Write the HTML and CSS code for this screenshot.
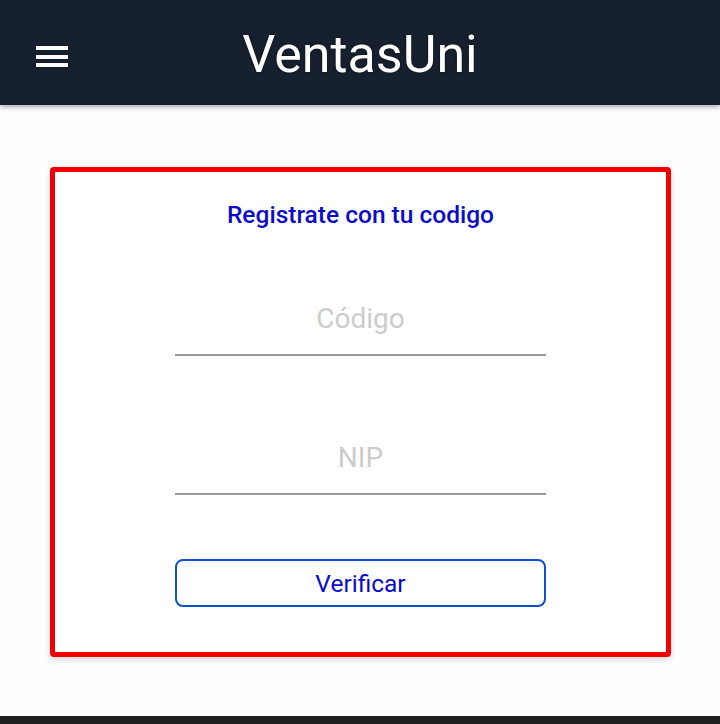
FILE: index.html
```html
<!DOCTYPE html>
<html lang="es">
<head>
<meta charset="utf-8">
<title>VentasUni</title>
<link rel="stylesheet" href="styles.css">
</head>
<body>
<header class="topbar">
  <button class="menu-btn" aria-label="Menú">
    <span class="bar"></span><span class="bar"></span><span class="bar"></span>
  </button>
  <h1 class="brand">VentasUni</h1>
</header>
<main class="content">
  <section class="card">
    <h2 class="card-title">Registrate con tu codigo</h2>
    <form class="form">
      <input class="field" type="text" placeholder="Código">
      <input class="field" type="password" placeholder="NIP">
      <button type="button" class="verify">Verificar</button>
    </form>
  </section>
</main>
<footer class="navbar"></footer>
</body>
</html>
```

FILE: styles.css
```css
* { box-sizing: border-box; }
html, body { margin: 0; padding: 0; }
body {
  width: 720px;
  height: 724px;
  background: #fefefe;
  font-family: Roboto, "Noto Sans", sans-serif;
  display: flex;
  flex-direction: column;
  overflow: hidden;
}
.topbar {
  height: 105px;
  background: #17202e;
  box-shadow: 0 2px 5px rgba(0,0,0,0.35);
  position: relative;
  display: flex;
  align-items: center;
  justify-content: center;
  flex-shrink: 0;
  z-index: 1;
}
.menu-btn {
  position: absolute;
  left: 36px;
  top: 46px;
  width: 32px;
  height: 21px;
  padding: 0;
  border: 0;
  background: transparent;
  display: flex;
  flex-direction: column;
  justify-content: space-between;
}
.bar {
  display: block;
  height: 4px;
  width: 32px;
  background: #ffffff;
  box-shadow: 0 0 2px #0a0f18;
}
.brand {
  margin: 0;
  margin-top: 4px;
  color: #ffffff;
  font-weight: 400;
  font-size: 52px;
  letter-spacing: 0;
  text-shadow: 0 0 3px #0c121b;
}
.content {
  flex: 1;
  padding: 62px 49px 0 50px;
}
.card {
  height: 490px;
  border: 5px solid #f00000;
  border-radius: 4px;
  background: #ffffff;
  box-shadow: 0 2px 6px rgba(0,0,0,0.18);
  display: flex;
  flex-direction: column;
  align-items: center;
  padding-top: 28px;
}
.card-title {
  margin: 0;
  font-size: 24.5px;
  font-weight: 500;
  color: #0b0bcc;
  line-height: 29px;
}
.form {
  width: 371px;
  display: flex;
  flex-direction: column;
  margin-top: 67px;
}
.field {
  height: 60px;
  border: 0;
  border-bottom: 2px solid #999999;
  background: transparent;
  text-align: center;
  font-family: Roboto, "Noto Sans", sans-serif;
  font-size: 28px;
  color: #333;
  padding: 0 0 14px;
  outline: none;
}
.field + .field { margin-top: 79px; }
.field::placeholder { color: #cccccc; }
.verify {
  margin-top: 64px;
  height: 48px;
  border: 2px solid #0d50d2;
  border-radius: 8px;
  background: #ffffff;
  color: #0b0bcc;
  font-family: Roboto, "Noto Sans", sans-serif;
  font-size: 24.5px;
  padding: 0;
}
.navbar {
  height: 8px;
  background: #202020;
  flex-shrink: 0;
}
```
